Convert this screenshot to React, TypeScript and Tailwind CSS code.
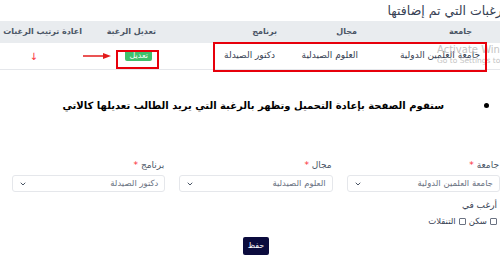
import { ChevronDown } from 'lucide-react';

const font = "font-['DejaVu_Sans',sans-serif]";

const FormSelect = ({ label, value }: { label: string; value: string }) => (
  <div className="flex flex-col">
    <label className="text-[9px] text-gray-600 leading-none mb-[5px] pr-[1px] whitespace-nowrap">
      {label} <span className="text-red-500">*</span>
    </label>
    <div className="h-[17px] border border-gray-200 rounded-[3px] bg-white flex items-center justify-between px-[6px]">
      <span className="text-[8.5px] text-gray-500 whitespace-nowrap">{value}</span>
      <ChevronDown className="w-[8px] h-[8px] text-gray-600" strokeWidth={3} />
    </div>
  </div>
);

const App = () => {
  return (
    <div className={`w-[500px] h-[262px] overflow-hidden bg-white ${font}`}>
      <div dir="rtl" className="relative w-[540px]">
        <h3 className="h-[21px] pr-[30px] pt-[2px] text-[12.5px] text-gray-700 leading-[18px] whitespace-nowrap">الرغبات التي تم إضافتها</h3>

        <div className="grid grid-cols-[57px_115px_81px_125px_72px_90px] bg-[#e9ecef] h-[22px] items-center text-[8px] font-bold text-gray-600 whitespace-nowrap">
          <div className="pr-[8px]">الأولوية</div>
          <div className="pr-[11px]">جامعة</div>
          <div className="pr-[11px]">مجال</div>
          <div className="pr-[10px]">برنامج</div>
          <div className="pr-[6px]">تعديل الرغبة</div>
          <div className="pr-[8px]">اعادة ترتيب الرغبات</div>
        </div>

        <div className="grid grid-cols-[57px_115px_81px_125px_72px_90px] h-[27px] items-center text-[9px] text-gray-700 border-b border-gray-200 whitespace-nowrap">
          <div className="pr-[8px]">1</div>
          <div className="pr-[3px]">جامعة العلمين الدولية</div>
          <div className="pr-[10px]">العلوم الصيدلية</div>
          <div className="pr-[12px]">دكتور الصيدلة</div>
          <div className="pr-[10px]">
            <span className="inline-block bg-[#3ec16b] text-white text-[8px] leading-[11px] px-[4px] rounded-[2px]">تعديل</span>
          </div>
          <div className="pr-[52px] text-red-500 text-[10px]">↓</div>
        </div>

        {/* windows watermark */}
        <div dir="ltr" className="absolute left-[437px] top-[44px] text-[#c4c4c4] whitespace-nowrap pointer-events-none">
          <div className="text-[10px] leading-[12px]">Activate Windows</div>
          <div className="text-[7.5px] leading-[10px]">Go to Settings to activate Windows.</div>
        </div>

        {/* annotations */}
        <div className="absolute left-[213px] top-[42px] w-[274px] h-[30px] border-2 border-red-600 pointer-events-none" />
        <div className="absolute left-[116px] top-[50px] w-[43px] h-[19px] border-2 border-red-600 pointer-events-none" />
        <svg className="absolute left-[83px] top-[52px]" width="28" height="8" viewBox="0 0 28 8">
          <line x1="0" y1="4" x2="22" y2="4" stroke="#e31b1b" strokeWidth="1.5" />
          <polygon points="20,1 28,4 20,7" fill="#e31b1b" />
        </svg>
      </div>

      <div dir="rtl" className="w-[500px] mt-[25px] pr-[11px] flex items-center h-[20px] whitespace-nowrap">
        <span className="w-[5px] h-[5px] rounded-full bg-black ml-[40px]" />
        <span className="font-bold text-[10px] text-black">ستقوم الصفحة بإعادة التحميل وتظهر بالرغبة التي يريد الطالب تعديلها كالاتي</span>
      </div>

      <div dir="rtl" className="w-[500px] mt-[46px] pl-[12px] grid grid-cols-3 gap-x-[14px]">
        <FormSelect label="جامعة" value="جامعة العلمين الدولية" />
        <FormSelect label="مجال" value="العلوم الصيدلية" />
        <FormSelect label="برنامج" value="دكتور الصيدلة" />
      </div>

      <div dir="rtl" className="w-[500px] pr-[3px] mt-[7px] text-[9px] text-gray-700 leading-[12px]">أرغب في</div>
      <div dir="rtl" className="w-[500px] pr-[3px] mt-[4px] flex items-center gap-[3px] text-[8.5px] text-gray-700 leading-[12px]">
        <span className="w-[7px] h-[7px] border border-gray-500 rounded-[1px]" />
        <span>سكن</span>
        <span className="w-[7px] h-[7px] border border-gray-500 rounded-[1px]" />
        <span>التنقلات</span>
      </div>

      <div className="flex justify-center mt-[10px]">
        <button className="ml-[12px] w-[26px] h-[18px] bg-[#0b0b3d] text-white text-[8px] rounded-[2px]">حفظ</button>
      </div>
    </div>
  );
};

export default App;
